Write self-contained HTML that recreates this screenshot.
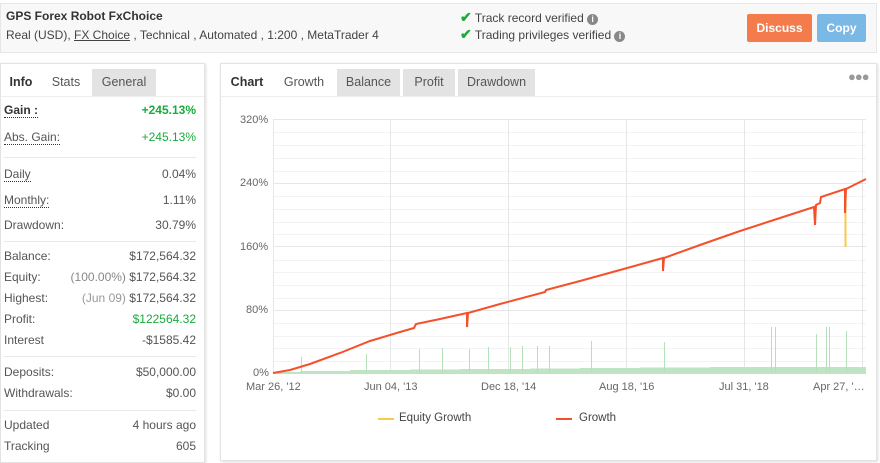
<!DOCTYPE html>
<html><head><meta charset="utf-8"><style>
*{margin:0;padding:0;box-sizing:border-box}
body{width:880px;height:463px;background:#fff;font-family:"Liberation Sans",Arial,sans-serif;position:relative;overflow:hidden;color:#555}
.abs{position:absolute}
.top{left:0;top:3px;width:877px;height:50px;background:#f8f8f8;border:1px solid #e6e6e6}
.lp{left:0;top:63px;width:205px;height:400px;border:1px solid #e3e3e3;box-shadow:1px 1px 3px #ddd;background:#fff}
.rp{left:220px;top:63px;width:657px;height:398px;border:1px solid #e3e3e3;box-shadow:1px 1px 3px #ddd;background:#fff}
.tab{position:absolute;top:5px;height:27px;line-height:27px;font-size:12.5px;text-align:center;color:#555}
.g{background:#e3e3e3}
.row{position:absolute;left:4px;width:192px;font-size:12px;height:16px;line-height:16px;color:#555}
.row .v{position:absolute;right:0;top:0}
.u{border-bottom:1px dotted #333}
.sep{position:absolute;left:4px;width:192px;height:1px;background:#e8e8e8}
.gr{color:#1aab3c}
.ax{position:absolute;font-size:11px;color:#666}
.ck{color:#1aab3c;font-weight:bold;font-size:14px}
</style></head><body>
<div class="abs top"></div>
<div class="abs" style="left:6px;top:9px;font-size:12px;font-weight:bold;color:#333">GPS Forex Robot FxChoice</div>
<div class="abs" style="left:6px;top:28px;font-size:12px;color:#444">Real (USD), <span style="text-decoration:underline">FX Choice</span> , Technical , Automated , 1:200 , MetaTrader 4</div>
<div class="abs" style="left:460px;top:9px;font-size:12px;color:#444"><span class="ck">✔</span> Track record verified <span style="display:inline-block;width:11px;height:11px;border-radius:50%;background:#888;color:#fff;font-size:9px;line-height:11px;text-align:center;font-weight:bold">i</span></div>
<div class="abs" style="left:460px;top:26px;font-size:12px;color:#444"><span class="ck">✔</span> Trading privileges verified <span style="display:inline-block;width:11px;height:11px;border-radius:50%;background:#888;color:#fff;font-size:9px;line-height:11px;text-align:center;font-weight:bold">i</span></div>
<div class="abs" style="left:747px;top:14px;width:65px;height:28px;background:#f47c4c;border-radius:2px;color:#fff;font-size:12px;font-weight:bold;text-align:center;line-height:28px">Discuss</div>
<div class="abs" style="left:817px;top:14px;width:49px;height:28px;background:#7ab8e6;border-radius:2px;color:#fff;font-size:12px;font-weight:bold;text-align:center;line-height:28px">Copy</div>

<div class="abs lp">
<div class="tab" style="left:0;width:40px;color:#333;font-weight:bold">Info</div>
<div class="tab" style="left:41px;width:48px">Stats</div>
<div class="tab g" style="left:91px;width:64px">General</div>
<div class="abs" style="left:0;top:32px;width:203px;height:1px;background:#eee"></div>
</div>
<div class="row" style="top:102px"><span class="u" style="font-weight:bold;color:#333">Gain :</span><span class="v gr" style="font-weight:bold">+245.13%</span></div>
<div class="row" style="top:129px"><span class="u">Abs. Gain:</span><span class="v gr">+245.13%</span></div>
<div class="sep" style="top:157px"></div>
<div class="row" style="top:166px"><span class="u">Daily</span><span class="v">0.04%</span></div>
<div class="row" style="top:192px"><span class="u">Monthly:</span><span class="v">1.11%</span></div>
<div class="row" style="top:217px">Drawdown:<span class="v">30.79%</span></div>
<div class="sep" style="top:241px"></div>
<div class="row" style="top:248px">Balance:<span class="v">$172,564.32</span></div>
<div class="row" style="top:269px">Equity:<span class="v"><span style="color:#888">(100.00%)</span> $172,564.32</span></div>
<div class="row" style="top:290px">Highest:<span class="v"><span style="color:#999">(Jun 09)</span> $172,564.32</span></div>
<div class="row" style="top:311px">Profit:<span class="v gr">$122564.32</span></div>
<div class="row" style="top:332px">Interest<span class="v">-$1585.42</span></div>
<div class="sep" style="top:356px"></div>
<div class="row" style="top:364px">Deposits:<span class="v">$50,000.00</span></div>
<div class="row" style="top:385px">Withdrawals:<span class="v">$0.00</span></div>
<div class="sep" style="top:410px"></div>
<div class="row" style="top:417px">Updated<span class="v">4 hours ago</span></div>
<div class="row" style="top:438px">Tracking<span class="v">605</span></div>

<div class="abs rp">
<div class="tab" style="left:0;width:52px;color:#333;font-weight:bold">Chart</div>
<div class="tab" style="left:53px;width:60px">Growth</div>
<div class="tab g" style="left:116px;width:63px">Balance</div>
<div class="tab g" style="left:182px;width:52px">Profit</div>
<div class="tab g" style="left:237px;width:77px">Drawdown</div>
<div class="abs" style="left:0;top:32px;width:655px;height:1px;background:#eee"></div>
<div class="abs" style="left:627px;top:5px;font-size:13px;color:#999;letter-spacing:-1px">●●●</div>
</div>

<svg class="abs" style="left:0;top:0" width="880" height="463">
<g stroke="#f3f3f3" stroke-width="1">
<line x1="273" x2="866" y1="132.5" y2="132.5"/><line x1="273" x2="866" y1="145.5" y2="145.5"/><line x1="273" x2="866" y1="158.5" y2="158.5"/><line x1="273" x2="866" y1="171.5" y2="171.5"/>
<line x1="273" x2="866" y1="196.5" y2="196.5"/><line x1="273" x2="866" y1="209.5" y2="209.5"/><line x1="273" x2="866" y1="222.5" y2="222.5"/><line x1="273" x2="866" y1="234.5" y2="234.5"/>
<line x1="273" x2="866" y1="260.5" y2="260.5"/><line x1="273" x2="866" y1="272.5" y2="272.5"/><line x1="273" x2="866" y1="285.5" y2="285.5"/><line x1="273" x2="866" y1="298.5" y2="298.5"/>
<line x1="273" x2="866" y1="323.5" y2="323.5"/><line x1="273" x2="866" y1="336.5" y2="336.5"/><line x1="273" x2="866" y1="348.5" y2="348.5"/><line x1="273" x2="866" y1="361.5" y2="361.5"/>
</g>
<g stroke="#e6e6e6" stroke-width="1">
<line x1="273" x2="866" y1="119.5" y2="119.5"/><line x1="273" x2="866" y1="183.5" y2="183.5"/><line x1="273" x2="866" y1="246.5" y2="246.5"/><line x1="273" x2="866" y1="310.5" y2="310.5"/>
<line x1="273.5" x2="273.5" y1="119" y2="373"/><line x1="390.5" x2="390.5" y1="119" y2="373"/><line x1="508.5" x2="508.5" y1="119" y2="373"/><line x1="626.5" x2="626.5" y1="119" y2="373"/><line x1="744.5" x2="744.5" y1="119" y2="373"/><line x1="862.5" x2="862.5" y1="119" y2="373"/>
</g>
<line x1="273" x2="866" y1="373.5" y2="373.5" stroke="#ccd6eb"/>
<path d="M273 373V372H300V371H350V370H410V369.5H460V369H530V368.5H580V368H640V367.5H710V367H866V373Z" fill="#bfe4c4"/>
<g stroke="#b4e0ba" stroke-width="1">
<line x1="301.5" x2="301.5" y1="357" y2="373"/><line x1="366.5" x2="366.5" y1="354" y2="373"/><line x1="419.5" x2="419.5" y1="349" y2="373"/><line x1="442.5" x2="442.5" y1="348" y2="373"/><line x1="469.5" x2="469.5" y1="349" y2="373"/><line x1="488.5" x2="488.5" y1="347" y2="373"/><line x1="510.5" x2="510.5" y1="347" y2="373"/><line x1="522.5" x2="522.5" y1="346" y2="373"/><line x1="537.5" x2="537.5" y1="346" y2="373"/><line x1="549.5" x2="549.5" y1="346" y2="373"/><line x1="591.5" x2="591.5" y1="341" y2="373"/><line x1="664.5" x2="664.5" y1="342" y2="373"/><line x1="771.5" x2="771.5" y1="327" y2="373"/><line x1="775.5" x2="775.5" y1="327" y2="373"/><line x1="816.5" x2="816.5" y1="334" y2="373"/><line x1="826.5" x2="826.5" y1="327" y2="373"/><line x1="829.5" x2="829.5" y1="327" y2="373"/><line x1="846.5" x2="846.5" y1="331" y2="373"/>
</g>
<line x1="845.5" x2="845.5" y1="190" y2="247" stroke="#fbc94a" stroke-width="2"/>
<polyline fill="none" stroke="#f4502a" stroke-width="2" points="273,373 290,370 310,364 340,353 370,341 400,332 414,328 416,324 440,319 467,313 467,327 468,313 500,304 545,292 546,290 580,281 620,270 663,258 663,271 664,258 700,245 740,231 780,218 814,207 815,225 816,205 820,203 821,197 845,189 845,213 846,189 866,179"/>
</svg>
<div class="ax" style="left:240px;top:114px">320%</div>
<div class="ax" style="left:240px;top:177px">240%</div>
<div class="ax" style="left:240px;top:241px">160%</div>
<div class="ax" style="left:246px;top:304px">80%</div>
<div class="ax" style="left:253px;top:367px">0%</div>
<div class="ax" style="left:246px;top:381px">Mar 26, '12</div>
<div class="ax" style="left:364px;top:381px">Jun 04, '13</div>
<div class="ax" style="left:481px;top:381px">Dec 18, '14</div>
<div class="ax" style="left:599px;top:381px">Aug 18, '16</div>
<div class="ax" style="left:719px;top:381px">Jul 31, '18</div>
<div class="ax" style="left:813px;top:381px">Apr 27, '…</div>
<div class="abs" style="left:378px;top:418px;width:16px;height:2px;background:#fbc94a"></div>
<div class="ax" style="left:399px;top:412px;font-size:11.5px;color:#444">Equity Growth</div>
<div class="abs" style="left:556px;top:418px;width:16px;height:2px;background:#f4502a"></div>
<div class="ax" style="left:579px;top:412px;font-size:11.5px;color:#444">Growth</div>
</body></html>
